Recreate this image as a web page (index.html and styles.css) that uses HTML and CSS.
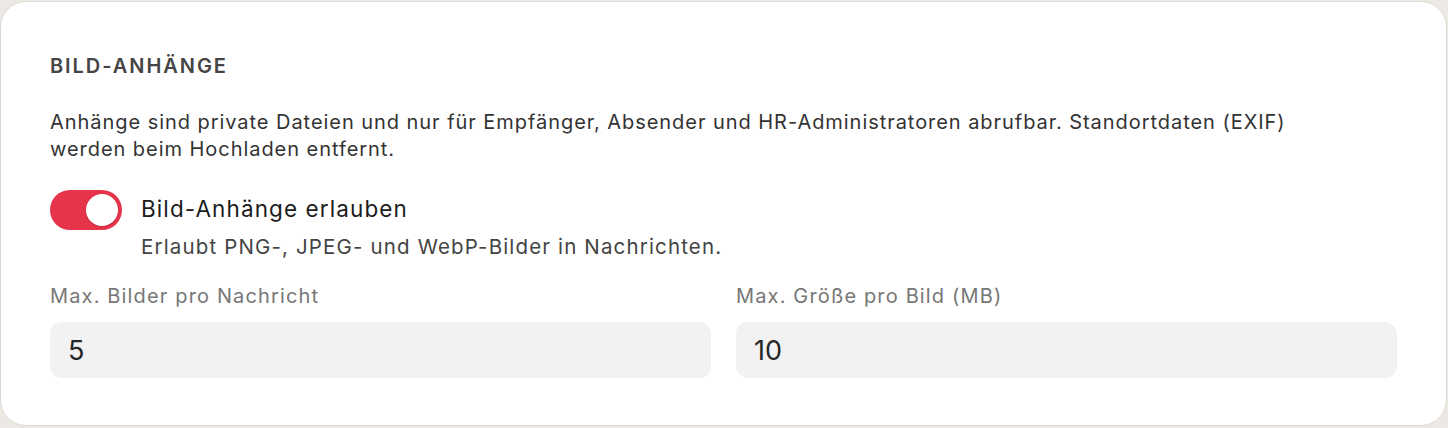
FILE: index.html
```html
<!DOCTYPE html>
<html lang="de">
<head>
    <meta charset="UTF-8">
    <meta name="viewport" content="width=device-width, initial-scale=1.0">
    <title>Bild-Anhänge</title>
    <link rel="stylesheet" href="styles.css">
</head>
<body>
    <section class="settings-card">
        <h2 class="section-title">Bild-Anhänge</h2>

        <p class="section-text">
            Anhänge sind private Dateien und nur für Empfänger, Absender und HR-Administratoren abrufbar. Standortdaten (EXIF) werden beim Hochladen entfernt.
        </p>

        <label class="toggle-row">
            <input type="checkbox" class="toggle-input" checked>
            <span class="toggle"><span class="toggle-knob"></span></span>
            <span class="toggle-text">
                <span class="toggle-label">Bild-Anhänge erlauben</span>
                <span class="toggle-hint">Erlaubt PNG-, JPEG- und WebP-Bilder in Nachrichten.</span>
            </span>
        </label>

        <div class="field-grid">
            <div class="field">
                <label class="field-label" for="maxImages">Max. Bilder pro Nachricht</label>
                <input class="field-input" id="maxImages" type="text" value="5">
            </div>
            <div class="field">
                <label class="field-label" for="maxSize">Max. Größe pro Bild (MB)</label>
                <input class="field-input" id="maxSize" type="text" value="10">
            </div>
        </div>
    </section>
</body>
</html>
```

FILE: styles.css
```css
* {
    margin: 0;
    padding: 0;
    box-sizing: border-box;
    font-family: Inter, 'Noto Sans', sans-serif;
}

body {
    background: #ece9e5;
    padding: 1px 1px 1px 0;
}

.settings-card {
    background: #ffffff;
    border: 1px solid #dedad4;
    border-radius: 26px;
    padding: 52px 49px 47px 49px;
}

.section-title {
    font-size: 20px;
    line-height: 24px;
    font-weight: 600;
    letter-spacing: 0.097em;
    text-transform: uppercase;
    color: #454545;
    margin-bottom: 31px;
}

.section-text {
    font-size: 20px;
    line-height: 27px;
    letter-spacing: 0.95px;
    color: #333333;
    max-width: 1300px;
    margin-bottom: 27px;
}

/* Toggle switch */
.toggle-row {
    display: flex;
    align-items: flex-start;
    gap: 19px;
    cursor: pointer;
    margin-bottom: 23px;
}

.toggle-input {
    display: none;
}

.toggle {
    flex: none;
    width: 72px;
    height: 40px;
    border-radius: 20px;
    background: #e6344b;
    padding: 4px;
    display: flex;
    justify-content: flex-start;
    transition: all 0.3s ease;
}

.toggle-input:checked + .toggle {
    justify-content: flex-end;
}

.toggle-input:not(:checked) + .toggle {
    background: #d6d3cf;
}

.toggle-knob {
    width: 32px;
    height: 32px;
    border-radius: 50%;
    background: #ffffff;
    box-shadow: 0 1px 2px rgba(0, 0, 0, 0.15);
}

.toggle-text {
    display: flex;
    flex-direction: column;
    gap: 10px;
}

.toggle-label {
    font-size: 22.5px;
    line-height: 30px;
    letter-spacing: 1.1px;
    color: #1c1c1c;
    margin-top: 4px;
}

.toggle-hint {
    font-size: 20.5px;
    line-height: 26px;
    letter-spacing: 1.15px;
    color: #444444;
}

/* Number fields */
.field-grid {
    display: grid;
    grid-template-columns: 1fr 1fr;
    gap: 25px;
}

.field {
    display: flex;
    flex-direction: column;
    gap: 13px;
}

.field-label {
    font-size: 20px;
    line-height: 26px;
    letter-spacing: 1.15px;
    color: #777777;
}

.field-input {
    width: 100%;
    height: 56px;
    border: none;
    outline: none;
    border-radius: 12px;
    background: #f2f2f2;
    padding: 0 18px;
    font-size: 27px;
    color: #262626;
}
```
